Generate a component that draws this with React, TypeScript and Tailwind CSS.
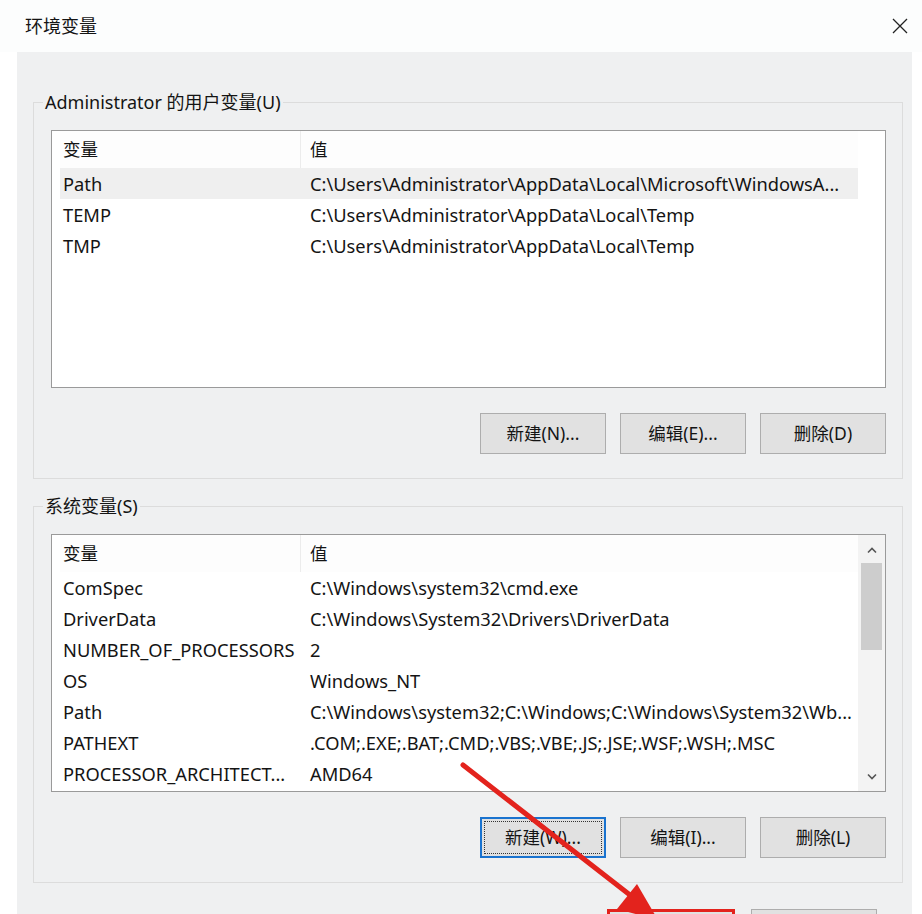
import React from 'react'

const userVars: [string, string][] = [
    ['Path', 'C:\\Users\\Administrator\\AppData\\Local\\Microsoft\\WindowsA...'],
    ['TEMP', 'C:\\Users\\Administrator\\AppData\\Local\\Temp'],
    ['TMP', 'C:\\Users\\Administrator\\AppData\\Local\\Temp'],
]

const sysVars: [string, string][] = [
    ['ComSpec', 'C:\\Windows\\system32\\cmd.exe'],
    ['DriverData', 'C:\\Windows\\System32\\Drivers\\DriverData'],
    ['NUMBER_OF_PROCESSORS', '2'],
    ['OS', 'Windows_NT'],
    ['Path', 'C:\\Windows\\system32;C:\\Windows;C:\\Windows\\System32\\Wb...'],
    ['PATHEXT', '.COM;.EXE;.BAT;.CMD;.VBS;.VBE;.JS;.JSE;.WSF;.WSH;.MSC'],
    ['PROCESSOR_ARCHITECT...', 'AMD64'],
]

function VarList({ rows, scroll, selected }: { rows: [string, string][]; scroll?: boolean; selected?: number }) {
    return (
        <div className="flex w-[835px] h-[258px] border border-[#9a9a9a] bg-white">
            <div className="flex-1 pl-[8px]">
                {/* header */}
                <div className="flex h-[37px] items-center bg-[#fdfdfd] text-[17.5px]">
                    <div className="w-[240px] pl-[3px]">变量</div>
                    <div className="h-full border-l border-[#ececec] pl-[9px] flex items-center">值</div>
                </div>
                {rows.map(([name, value], i) => (
                    <div key={name + i} className={`flex h-[31px] items-center ${selected === i ? 'bg-[#efefef]' : ''}`}>
                        <div className="w-[240px] pl-[3px] whitespace-nowrap">{name}</div>
                        <div className="pl-[10px] whitespace-nowrap">{value}</div>
                    </div>
                ))}
            </div>
            {scroll ? (
                <div className="w-[27px] flex flex-col items-center bg-[#f3f3f3] py-[1px]">
                    <div className="h-[27px] flex items-center justify-center">
                        <svg width="12" height="8" viewBox="0 0 12 8"><path d="M2 6.5 L6 2.5 L10 6.5" fill="none" stroke="#555" strokeWidth="1.6" /></svg>
                    </div>
                    <div className="w-[21px] h-[87px] bg-[#cdcdcd]" />
                    <div className="flex-1" />
                    <div className="h-[27px] flex items-center justify-center">
                        <svg width="12" height="8" viewBox="0 0 12 8"><path d="M2 1.5 L6 5.5 L10 1.5" fill="none" stroke="#555" strokeWidth="1.6" /></svg>
                    </div>
                </div>
            ) : (
                <div className="w-[27px] bg-white" />
            )}
        </div>
    )
}

function Btn({ label, focus, className = '' }: { label?: string; focus?: boolean; className?: string }) {
    return (
        <div
            className={`w-[126px] h-[41px] flex items-center justify-center bg-[#e1e1e1] text-[17.5px] ${
                focus ? 'border-2 border-[#1a73cf]' : 'border border-[#adadad]'
            } ${className}`}
        >
            {focus ? (
                <div className="w-[118px] h-[33px] border border-dotted border-[#333] flex items-center justify-center">{label}</div>
            ) : (
                label
            )}
        </div>
    )
}

function Group({ title, rows, buttons, scroll, selected, focusFirst }: {
    title: string
    rows: [string, string][]
    buttons: string[]
    scroll?: boolean
    selected?: number
    focusFirst?: boolean
}) {
    return (
        <fieldset className="ml-[16px] w-[870px] border border-[#dcdcdc] pl-[9px] pr-[16px] pb-[24px]">
            <legend className="px-[2px] h-[22px] leading-[22px] text-[18px]">{title}</legend>
            <div className="pl-[8px] pt-[17px]">
                <VarList rows={rows} scroll={scroll} selected={selected} />
                <div className="mt-[25px] flex justify-end gap-[14px]">
                    {buttons.map((b, i) => (
                        <Btn key={b} label={b} focus={focusFirst && i === 0} />
                    ))}
                </div>
            </div>
        </fieldset>
    )
}

export default function App() {
    return (
        <div className="relative w-[922px] h-[914px] overflow-hidden bg-white text-[#141414] text-[18.3px] font-['Noto_Sans','Noto_Sans_CJK_SC',sans-serif]">
            {/* title bar */}
            <div className="h-[52px] flex items-center justify-between pl-[25px] pr-[14px] bg-[#fcfdfd]">
                <span className="text-[18px]">环境变量</span>
                <svg width="16" height="16" viewBox="0 0 16 16">
                    <path d="M1 1 L15 15 M15 1 L1 15" stroke="#222" strokeWidth="1.3" />
                </svg>
            </div>

            {/* dialog body */}
            <div className="ml-[17px] w-[895px] h-[862px] bg-[#eff0f1] pt-[39px]">
                <Group
                    title="Administrator 的用户变量(U)"
                    rows={userVars}
                    selected={0}
                    buttons={['新建(N)...', '编辑(E)...', '删除(D)']}
                />
                <div className="h-[16px]" />
                <Group
                    title="系统变量(S)"
                    rows={sysVars}
                    scroll
                    focusFirst
                    buttons={['新建(W)...', '编辑(I)...', '删除(L)']}
                />
                {/* OK / Cancel, only their top edges are in view */}
                <div className="mt-[26px] ml-[590px] flex gap-[16px]">
                    <div className="w-[128px] h-[41px] border-[3px] border-[#e3231d] bg-[#e1e1e1]" />
                    <Btn />
                </div>
            </div>

            {/* red annotation arrow */}
            <svg className="absolute inset-0 pointer-events-none" width="922" height="914" viewBox="0 0 922 914">
                <line x1="463" y1="765" x2="630" y2="895" stroke="#e3231d" strokeWidth="5" strokeLinecap="round" />
                <polygon points="658,920 617,909 637,884" fill="#e3231d" />
            </svg>
        </div>
    )
}
